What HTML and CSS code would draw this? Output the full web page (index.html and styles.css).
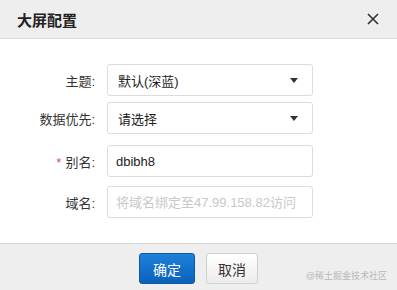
FILE: index.html
```html
<!DOCTYPE html>
<html>
<head>
  <meta charset="utf-8">
  <title>大屏配置</title>
  <link rel="stylesheet" href="styles.css">
</head>
<body>
  <div class="dialog">
    <div class="dialog-head">
      <span class="dialog-title">大屏配置</span>
      <span class="dialog-close">
        <svg width="12" height="12" viewBox="0 0 12 12"><path d="M1 1 L11 11 M11 1 L1 11" stroke="#333" stroke-width="1.6" fill="none"/></svg>
      </span>
    </div>

    <div class="dialog-body">
      <div class="form-row row-a">
        <label class="form-label">主题:</label>
        <div class="form-select">
          <span>默认(深蓝)</span>
          <span class="caret"></span>
        </div>
      </div>
      <div class="form-row row-b">
        <label class="form-label">数据优先:</label>
        <div class="form-select">
          <span>请选择</span>
          <span class="caret"></span>
        </div>
      </div>
      <div class="form-row row-c">
        <label class="form-label"><span class="required">*</span>别名:</label>
        <input class="form-input" value="dbibh8">
      </div>
      <div class="form-row">
        <label class="form-label">域名:</label>
        <input class="form-input" placeholder="将域名绑定至47.99.158.82访问">
      </div>
    </div>

    <div class="dialog-foot">
      <button class="btn btn-primary">确定</button>
      <button class="btn btn-default">取消</button>
      <span class="watermark">@稀土掘金技术社区</span>
    </div>
  </div>
</body>
</html>
```

FILE: styles.css
```css
body {
  margin: 0;
  font-family: "Liberation Sans", "Noto Sans CJK SC", sans-serif;
  color: #333;
  background-color: #fff;
}

.dialog {
  width: 397px;
  height: 290px;
  display: flex;
  flex-direction: column;
}

.dialog-head {
  height: 39px;
  box-sizing: border-box;
  flex-shrink: 0;
  background-color: #eeeeee;
  border-bottom: 1px solid #dcdcdc;
  display: flex;
  align-items: center;
  justify-content: space-between;
  padding: 0 18px 0 17px;
}

.dialog-title {
  font-size: 15px;
  font-weight: bold;
  color: #222;
}

.dialog-close {
  display: flex;
  cursor: pointer;
}

.dialog-body {
  flex: 1;
  padding-top: 25px;
}

.form-row {
  display: flex;
  align-items: center;
  margin-bottom: 9px;
}

.row-a {
  margin-bottom: 6px;
}

.row-b {
  margin-bottom: 11px;
}

.form-label {
  width: 107px;
  padding-right: 12px;
  box-sizing: border-box;
  flex-shrink: 0;
  text-align: right;
  font-size: 13px;
  color: #333;
}

.required {
  color: #d9534f;
  margin-right: 4px;
}

.form-select, .form-input {
  width: 206px;
  height: 32px;
  box-sizing: border-box;
  border: 1px solid #dcdcdc;
  border-radius: 3px;
  background-color: #fff;
  font-family: inherit;
  font-size: 13px;
  color: #222;
}

.form-select {
  display: flex;
  align-items: center;
  justify-content: space-between;
  padding: 0 14px 0 10px;
}

.caret {
  width: 0;
  height: 0;
  border-left: 4px solid transparent;
  border-right: 4px solid transparent;
  border-top: 5px solid #333;
}

.form-input {
  padding: 0 8px;
  outline: none;
}

.form-input::placeholder {
  color: #c8c8c8;
}

.dialog-foot {
  height: 47px;
  box-sizing: border-box;
  flex-shrink: 0;
  background-color: #eeeeee;
  border-top: 1px solid #d8d8d8;
  display: flex;
  justify-content: center;
  align-items: flex-start;
  gap: 11px;
  padding-top: 9px;
  position: relative;
}

.btn {
  height: 31px;
  font-family: inherit;
  font-size: 14px;
  border-radius: 3px;
  white-space: nowrap;
  cursor: pointer;
}

.btn-primary {
  padding: 0 13px;
  color: #fff;
  border: 1px solid #0a58a8;
  background: linear-gradient(#1d80da, #0a62ba);
}

.btn-default {
  padding: 0 11px;
  color: #333;
  border: 1px solid #cfcfcf;
  background: linear-gradient(#ffffff, #ececec);
}

.watermark {
  position: absolute;
  right: 10px;
  bottom: 8px;
  font-size: 9px;
  color: #b8b8b8;
}
```
